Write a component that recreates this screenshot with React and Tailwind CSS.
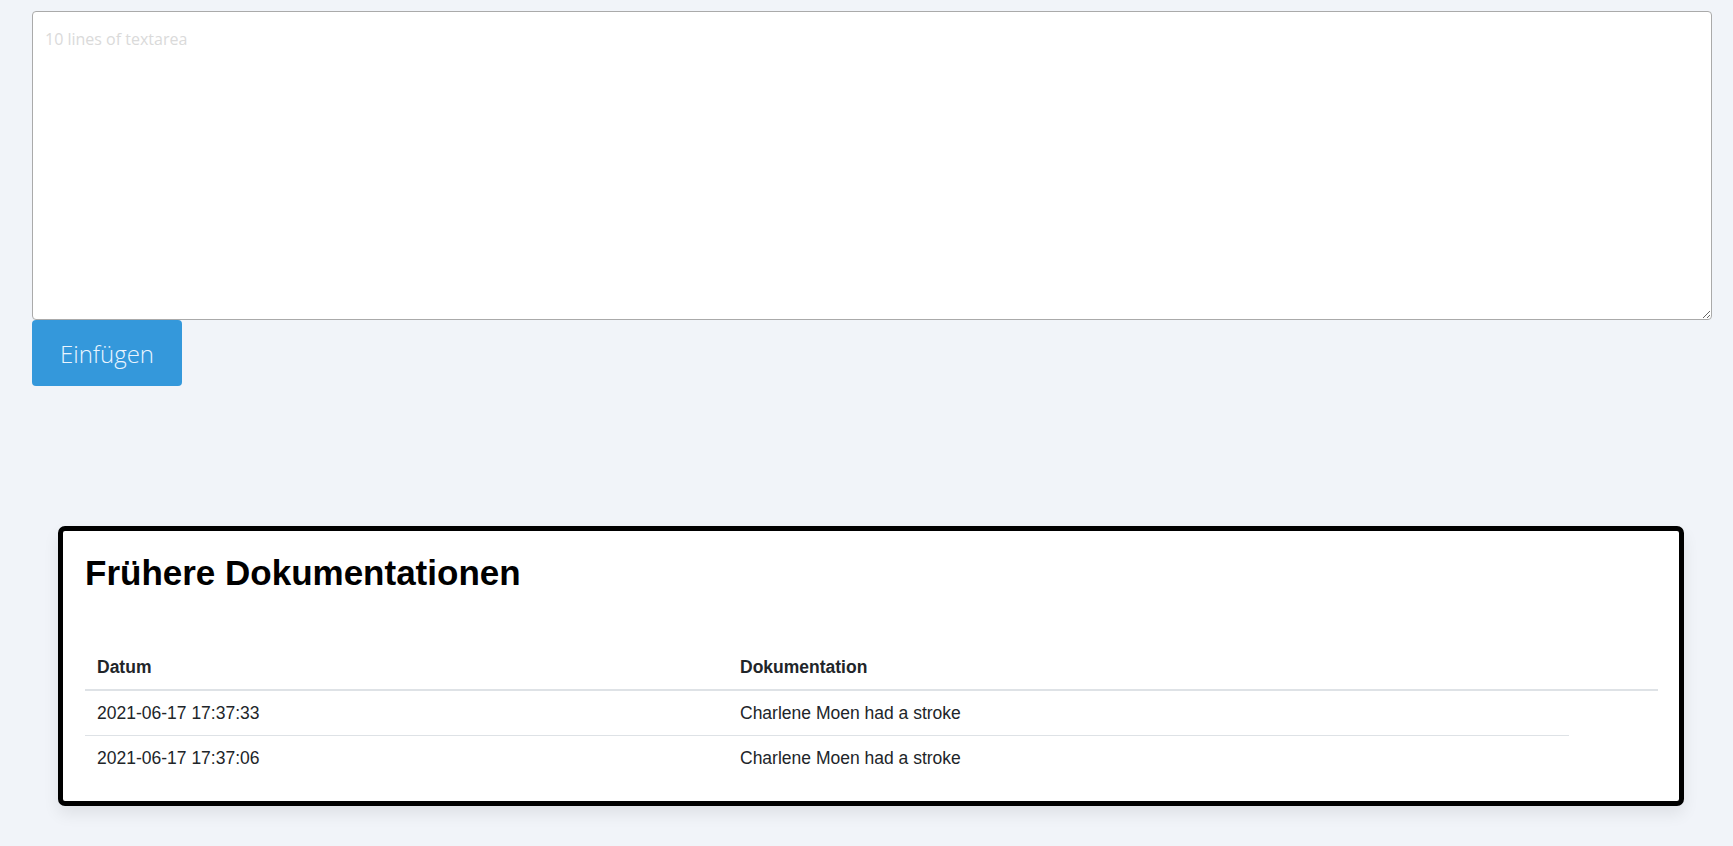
import React from "react";

const rows = [
    { date: "2021-06-17 17:37:33", text: "Charlene Moen had a stroke" },
    { date: "2021-06-17 17:37:06", text: "Charlene Moen had a stroke" },
];

const App = () => {
    return (
        <div className="min-h-[846px] bg-[#f1f4f9] pt-[11px] font-['Liberation_Sans',Arial,sans-serif]">

            {/* FORM */}
            <div className="pl-[32px] pr-[21px]">
                <textarea
                    rows={10}
                    placeholder="10 lines of textarea"
                    className="block w-full h-[309px] border border-[#aaaaaa] rounded-[4px] bg-white px-[12px] pt-[16px] pb-[12px] text-[16px] leading-[22px] text-[#333] placeholder:text-[#dadada] font-['Open_Sans',sans-serif] outline-none"
                />
                <button
                    type="button"
                    className="block w-[150px] h-[66px] bg-[#3498db] text-[#eaf5ff] rounded-[4px] text-[24px] font-light font-['Open_Sans',sans-serif] pt-[2px]"
                >
                    Einfügen
                </button>
            </div>

            {/* CARD */}
            <div className="ml-[58px] mr-[49px] mt-[140px] bg-white border-[5px] border-black rounded-[7px] shadow-[0_8px_16px_rgba(0,0,0,0.08)] px-[22px] pt-[22px] pb-[21px]">
                <h1 className="text-[35px] font-bold leading-[40px] text-black mb-[52px]">
                    Frühere Dokumentationen
                </h1>

                <table className="w-[1573px] text-[17.5px] leading-[20px] text-[#212529] border-collapse">
                    <thead>
                        <tr>
                            <th className="w-[643px] text-left font-bold px-[12px] py-[12px] border-b-2 border-[#dee2e6]">Datum</th>
                            <th className="w-[841px] text-left font-bold px-[12px] py-[12px] border-b-2 border-[#dee2e6]">Dokumentation</th>
                            <th className="border-b-2 border-[#dee2e6]"></th>
                        </tr>
                    </thead>
                    <tbody>
                        {rows.map((r, i) => (
                            <tr key={i}>
                                <td className={"px-[12px] py-[12px] " + (i > 0 ? "border-t border-[#dee2e6]" : "")}>{r.date}</td>
                                <td className={"px-[12px] py-[12px] " + (i > 0 ? "border-t border-[#dee2e6]" : "")}>{r.text}</td>
                            </tr>
                        ))}
                    </tbody>
                </table>
            </div>
        </div>
    );
};

export default App;
